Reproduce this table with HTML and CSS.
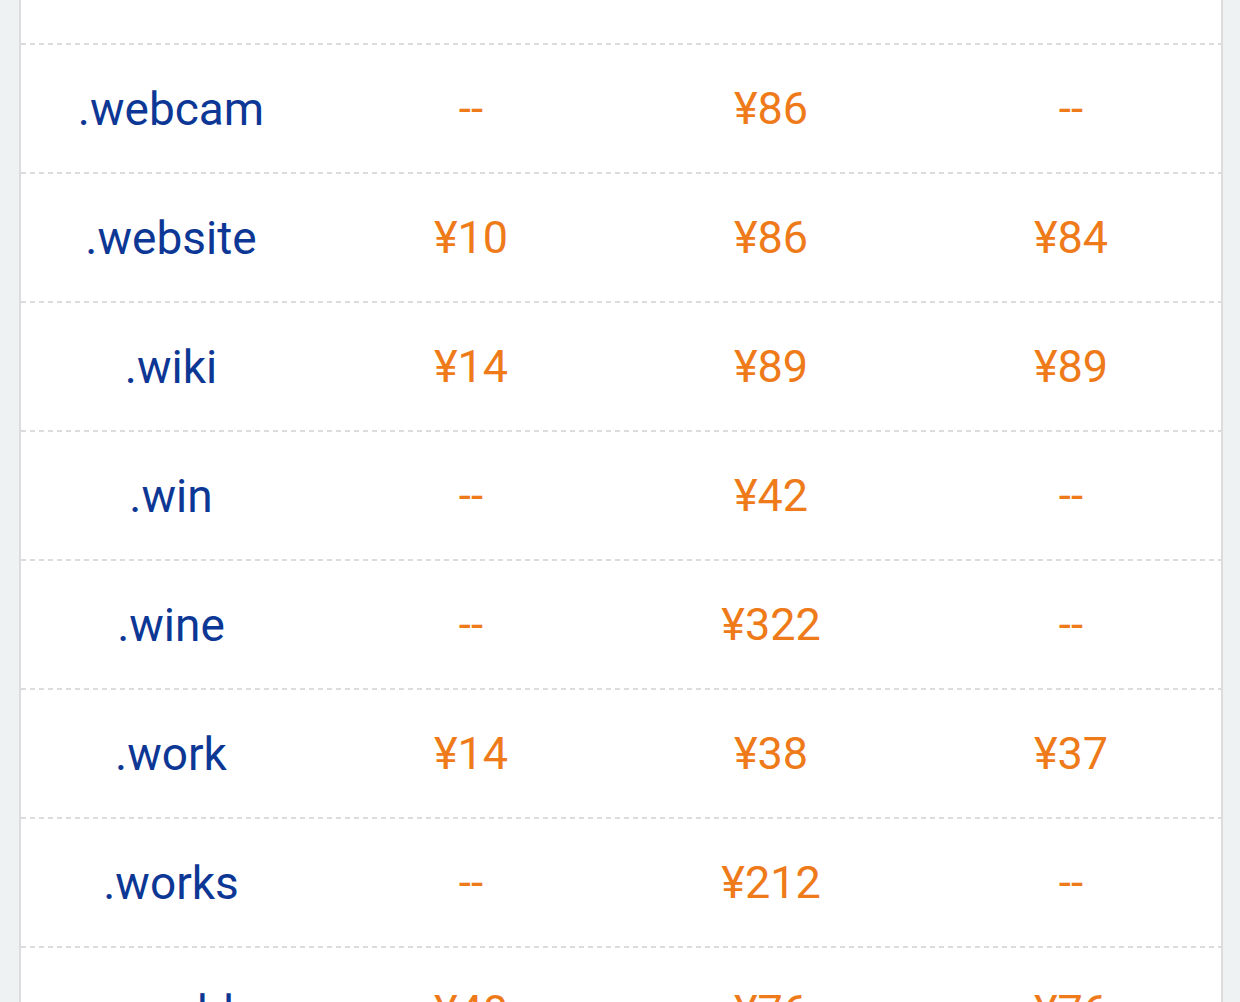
FILE: index.html
```html
<!DOCTYPE html>
<html lang="zh">
<head>
<meta charset="utf-8">
<title>域名价格</title>
<link rel="stylesheet" href="styles.css">
</head>
<body>
<div class="page">
  <div class="table">
    <div class="row row-partial"></div>
    <div class="row"><div class="cell name">.webcam</div><div class="cell price none">--</div><div class="cell price">¥86</div><div class="cell price none">--</div></div>
    <div class="row"><div class="cell name">.website</div><div class="cell price">¥10</div><div class="cell price">¥86</div><div class="cell price">¥84</div></div>
    <div class="row"><div class="cell name">.wiki</div><div class="cell price">¥14</div><div class="cell price">¥89</div><div class="cell price">¥89</div></div>
    <div class="row"><div class="cell name">.win</div><div class="cell price none">--</div><div class="cell price">¥42</div><div class="cell price none">--</div></div>
    <div class="row"><div class="cell name">.wine</div><div class="cell price none">--</div><div class="cell price">¥322</div><div class="cell price none">--</div></div>
    <div class="row"><div class="cell name">.work</div><div class="cell price">¥14</div><div class="cell price">¥38</div><div class="cell price">¥37</div></div>
    <div class="row"><div class="cell name">.works</div><div class="cell price none">--</div><div class="cell price">¥212</div><div class="cell price none">--</div></div>
    <div class="row"><div class="cell name">.world</div><div class="cell price">¥40</div><div class="cell price">¥76</div><div class="cell price">¥76</div></div>
  </div>
</div>
</body>
</html>
```

FILE: styles.css
```css
html, body {
  margin: 0;
  padding: 0;
  background: #eef2f3;
  height: 100%;
  overflow: hidden;
}

.page {
  padding-left: 19px;
  font-family: Roboto, "Noto Sans", "Noto Sans CJK SC", sans-serif;
}

.table {
  width: 1200px;
  background: #ffffff;
  border-left: 2px solid #dcdcdc;
  border-right: 2px solid #dcdcdc;
}

.row {
  display: grid;
  grid-template-columns: repeat(4, 1fr);
  height: 129px;
  box-sizing: border-box;
  padding-top: 2px;
  background: repeating-linear-gradient(90deg, #dcdcdc 0 5px, transparent 5px 9px) top left / 100% 2px no-repeat;
}

.row-partial {
  height: 43px;
  padding-top: 0;
  background: none;
}

.cell {
  display: flex;
  align-items: center;
  justify-content: center;
  font-size: 45px;
  line-height: 1;
}

.name {
  color: #0d3795;
  font-size: 46px;
}

.price {
  color: #ee7a1a;
}

.none {
  font-size: 44px;
}
```
